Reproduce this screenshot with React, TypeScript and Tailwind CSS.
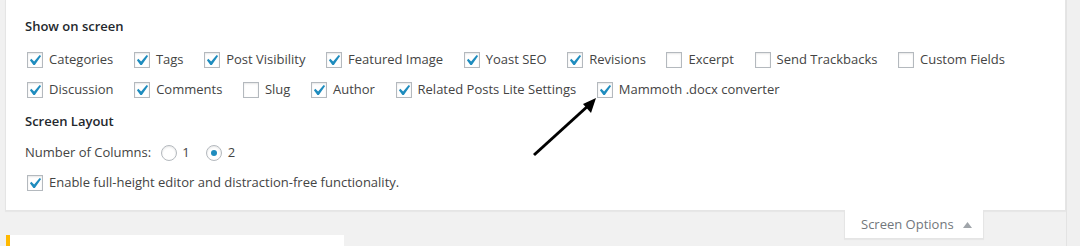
import React from "react";

type Item = { label: string; checked: boolean };

const rowOne: Item[] = [
  { label: "Categories", checked: true },
  { label: "Tags", checked: true },
  { label: "Post Visibility", checked: true },
  { label: "Featured Image", checked: true },
  { label: "Yoast SEO", checked: true },
  { label: "Revisions", checked: true },
  { label: "Excerpt", checked: false },
  { label: "Send Trackbacks", checked: false },
  { label: "Custom Fields", checked: false },
];

const rowTwo: Item[] = [
  { label: "Discussion", checked: true },
  { label: "Comments", checked: true },
  { label: "Slug", checked: false },
  { label: "Author", checked: true },
  { label: "Related Posts Lite Settings", checked: true },
  { label: "Mammoth .docx converter", checked: true },
];

function Checkbox({ checked }: { checked: boolean }) {
  return (
    <span className="flex h-4 w-4 shrink-0 items-center justify-center border border-[#b4b9be] bg-white shadow-[inset_0_1px_2px_rgba(0,0,0,0.1)]">
      {checked && (
        <svg width="14" height="14" viewBox="4 3 13 13">
          <path
            d="M14.83 4.89l1.34.94-5.81 8.38H9.02L5.78 9.67l1.34-1.25 2.57 2.4z"
            fill="#1e8cbe"
          />
        </svg>
      )}
    </span>
  );
}

function Radio({ checked }: { checked: boolean }) {
  return (
    <span className="flex h-4 w-4 shrink-0 items-center justify-center rounded-full border border-[#b4b9be] bg-white shadow-[inset_0_1px_2px_rgba(0,0,0,0.1)]">
      {checked && <span className="h-[6px] w-[6px] rounded-full bg-[#1e8cbe]" />}
    </span>
  );
}

function CheckRow({ items }: { items: Item[] }) {
  return (
    <div className="flex h-[30px] items-center gap-x-[20.6px] pl-[2px]">
      {items.map((item) => (
        <label key={item.label} className="flex items-center gap-[6px]">
          <Checkbox checked={item.checked} />
          <span>{item.label}</span>
        </label>
      ))}
    </div>
  );
}

export default function App() {
  return (
    <div
      className="relative flex h-[246px] w-[1080px] overflow-hidden bg-[#f1f1f1] text-[13px] text-[#444]"
      style={{ fontFamily: '"Open Sans", "Noto Sans", sans-serif' }}
    >
      <div className="flex w-[1066px] flex-col">
        <div className="h-[2px] bg-[#23282d]" />

        {/* ------------------ SCREEN META PANEL ------------------ */}
        <div className="ml-[5px] border border-t-0 border-[#e5e5e5] bg-white pb-[12px] pl-[19px] pt-[16px] shadow-[0_1px_1px_rgba(0,0,0,0.04)]">
          <div className="h-5 font-semibold leading-5 text-[#23282d]">Show on screen</div>
          <div className="mt-[9px]">
            <CheckRow items={rowOne} />
            <CheckRow items={rowTwo} />
          </div>

          <div className="mt-[6px] h-5 font-semibold leading-5 text-[#23282d]">Screen Layout</div>
          <div className="mt-[7px] flex h-[30px] items-center">
            <span className="mr-[10px]">Number of Columns:</span>
            <label className="mr-[16px] flex items-center gap-[5px]">
              <Radio checked={false} />
              <span>1</span>
            </label>
            <label className="flex items-center gap-[6px]">
              <Radio checked />
              <span>2</span>
            </label>
          </div>
          <label className="flex h-[30px] items-center gap-[6px] pl-[2px]">
            <Checkbox checked />
            <span>Enable full-height editor and distraction-free functionality.</span>
          </label>
        </div>

        {/* ------------------ BELOW PANEL ------------------ */}
        <div className="flex items-start">
          <div className="ml-[6px] mt-[24px] h-[20px] w-[338px] border-l-4 border-[#ffb900] bg-white" />
          <div className="relative z-10 ml-auto mr-[82px] -mt-px flex h-[29px] w-[140px] items-center border border-t-0 border-[#e5e5e5] bg-white pl-[16px] pt-[1px] text-[#72777c] shadow-[0_1px_1px_rgba(0,0,0,0.04)]">
            <span>Screen Options</span>
            <svg className="ml-[9px]" width="9" height="6" viewBox="0 0 9 6">
              <path d="M4.5 0L9 6H0z" fill="#a0a5aa" />
            </svg>
          </div>
        </div>
      </div>

      {/* scrollbar strip */}
      <div className="w-[14px] border-l border-[#e3e3e3] bg-[#f0f0f0]" />

      {/* annotation arrow */}
      <svg className="pointer-events-none absolute left-0 top-0" width="1080" height="246">
        <line x1="534" y1="155" x2="589" y2="105" stroke="#000" strokeWidth="3" />
        <path d="M596 98L583 104L591 113z" fill="#000" />
      </svg>
    </div>
  );
}
